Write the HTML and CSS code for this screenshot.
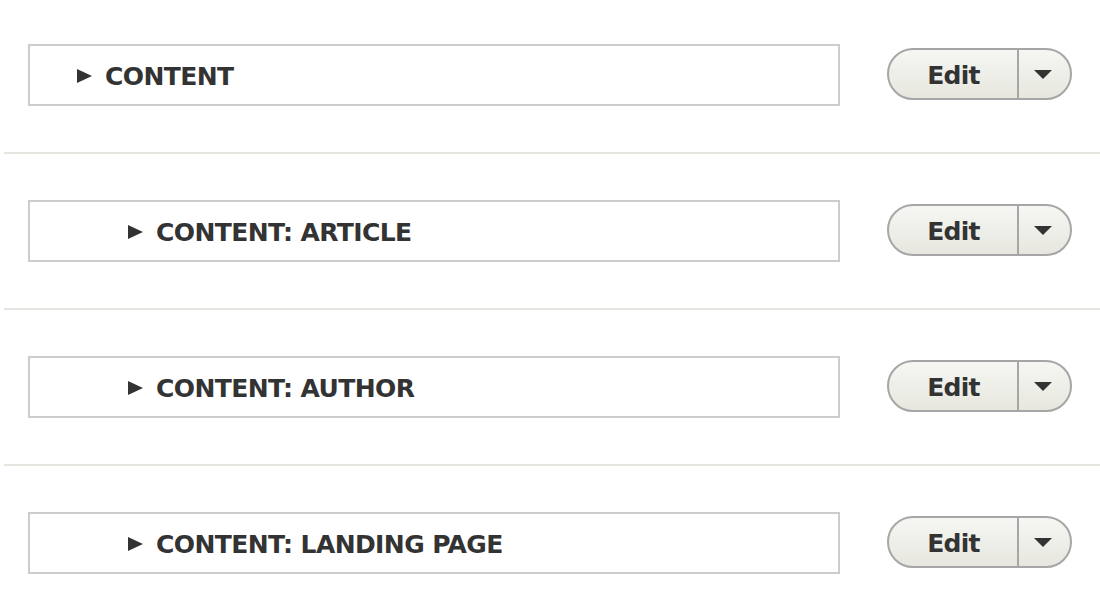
FILE: index.html
```html
<!DOCTYPE html>
<html>
<head>
<meta charset="utf-8">
<link rel="stylesheet" href="styles.css">
</head>
<body>
<div class="list">
  <div class="row first">
    <div class="details">
      <div class="summary">
        <svg class="tri" width="15" height="14" viewBox="0 0 15 14"><polygon points="0,0 15,7 0,14" fill="#333"/></svg>
        <span class="label">CONTENT</span>
      </div>
    </div>
    <div class="dropbutton">
      <span class="main">Edit</span>
      <span class="toggle"><svg width="18" height="9" viewBox="0 0 18 9"><polygon points="0,0 18,0 9,9" fill="#333"/></svg></span>
    </div>
  </div>
  <div class="row">
    <div class="details">
      <div class="summary indent">
        <svg class="tri" width="15" height="14" viewBox="0 0 15 14"><polygon points="0,0 15,7 0,14" fill="#333"/></svg>
        <span class="label">CONTENT: ARTICLE</span>
      </div>
    </div>
    <div class="dropbutton">
      <span class="main">Edit</span>
      <span class="toggle"><svg width="18" height="9" viewBox="0 0 18 9"><polygon points="0,0 18,0 9,9" fill="#333"/></svg></span>
    </div>
  </div>
  <div class="row">
    <div class="details">
      <div class="summary indent">
        <svg class="tri" width="15" height="14" viewBox="0 0 15 14"><polygon points="0,0 15,7 0,14" fill="#333"/></svg>
        <span class="label">CONTENT: AUTHOR</span>
      </div>
    </div>
    <div class="dropbutton">
      <span class="main">Edit</span>
      <span class="toggle"><svg width="18" height="9" viewBox="0 0 18 9"><polygon points="0,0 18,0 9,9" fill="#333"/></svg></span>
    </div>
  </div>
  <div class="row">
    <div class="details">
      <div class="summary indent">
        <svg class="tri" width="15" height="14" viewBox="0 0 15 14"><polygon points="0,0 15,7 0,14" fill="#333"/></svg>
        <span class="label">CONTENT: LANDING PAGE</span>
      </div>
    </div>
    <div class="dropbutton">
      <span class="main">Edit</span>
      <span class="toggle"><svg width="18" height="9" viewBox="0 0 18 9"><polygon points="0,0 18,0 9,9" fill="#333"/></svg></span>
    </div>
  </div>
</div>
</body>
</html>
```

FILE: styles.css
```css
html, body {
  margin: 0;
  padding: 0;
  background: #fff;
  overflow: hidden;
}
body {
  font-family: "DejaVu Sans", Verdana, sans-serif;
  color: #333;
}
.list {
  margin-left: 4px;
}
.row {
  display: flex;
  align-items: flex-start;
  padding: 46px 0 46px 24px;
  border-bottom: 2px solid #e6e5e0;
}
.row.first {
  margin-top: -2px;
}
.details {
  width: 812px;
  height: 62px;
  box-sizing: border-box;
  border: 2px solid #cccccc;
  display: flex;
  align-items: center;
}
.summary {
  display: flex;
  align-items: center;
  padding-left: 47px;
  gap: 13px;
  margin-top: 3px;
}
.summary.indent {
  padding-left: 98px;
}
.tri {
  display: block;
  flex: none;
  margin-top: -2px;
}
.label {
  font-weight: bold;
  font-size: 25px;
  letter-spacing: -0.6px;
  line-height: 30px;
}
.dropbutton {
  margin-left: 47px;
  margin-top: 4px;
  display: flex;
  height: 52px;
  box-sizing: border-box;
  border: 2px solid #a6a6a6;
  border-radius: 26px;
  background: linear-gradient(to bottom, #f6f6f3, #e7e7df);
  overflow: hidden;
}
.main {
  width: 128px;
  display: flex;
  align-items: center;
  justify-content: center;
  font-weight: bold;
  font-size: 25px;
  letter-spacing: -0.8px;
  padding-left: 1px;
  box-sizing: border-box;
  padding-top: 2px;
}
.toggle {
  width: 53px;
  border-left: 2px solid #a6a6a6;
  display: flex;
  align-items: center;
  justify-content: center;
  padding-right: 4px;
  box-sizing: border-box;
}
.toggle svg {
  display: block;
  margin-top: 1px;
}
```
